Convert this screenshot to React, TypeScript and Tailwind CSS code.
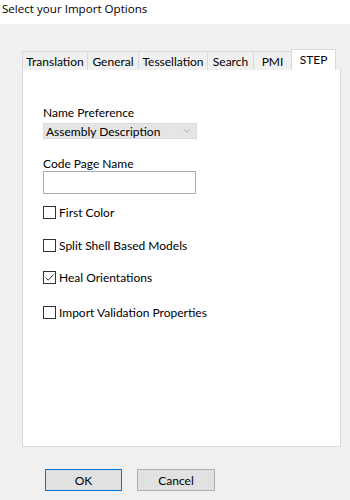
import { ChevronDown } from "lucide-react";

const TABS = [
  { label: "Translation", w: "w-[65px]" },
  { label: "General", w: "w-[51px]" },
  { label: "Tessellation", w: "w-[69px]" },
  { label: "Search", w: "w-[46px]" },
  { label: "PMI", w: "w-[38px]" },
];

const OPTIONS = [
  { label: "First Color", checked: false, mt: "mt-[11px]" },
  { label: "Split Shell Based Models", checked: false, mt: "mt-[18px]" },
  { label: "Heal Orientations", checked: true, mt: "mt-[17px]" },
  { label: "Import Validation Properties", checked: false, mt: "mt-[20px]" },
];

function Checkbox({ checked }: { checked: boolean }) {
  return (
    <span className="w-[13px] h-[13px] border border-[#333333] bg-white flex items-center justify-center shrink-0">
      {checked && (
        <svg width="11" height="11" viewBox="0 0 11 11" fill="none">
          <path d="M1.5 5.5 L4.2 8.2 L9.5 2.5" stroke="#333333" strokeWidth="1" />
        </svg>
      )}
    </span>
  );
}

export default function App() {
  return (
    <div className="w-[350px] h-[500px] flex flex-col bg-white text-black font-['Lato',sans-serif] text-[12px] leading-[15px]">
      <div className="h-6 pl-[2px] pt-[1px] text-[11.6px] font-['Open_Sans',sans-serif]">
        Select your Import Options
      </div>
      <div className="flex-1 bg-[#f0f0f0] pl-[22px] pr-[9px] pt-[25px]">
        <div className="flex items-end h-[21px]">
          {TABS.map((t) => (
            <div
              key={t.label}
              className={`${t.w} h-[19px] border border-r-0 border-b-0 border-[#d9d9d9] bg-[#f0f0f0] flex items-center justify-center`}
            >
              {t.label}
            </div>
          ))}
          <div className="w-[45px] h-[21px] border border-b-0 border-[#d9d9d9] bg-white flex items-start justify-center pt-[2px]">
            STEP
          </div>
        </div>
        <div className="h-[377px] bg-white border border-t-0 border-[#d9d9d9] pl-[20px] pt-[35px]">
          <div>Name Preference</div>
          <div className="mt-[3px] w-[154px] h-[16px] bg-[#e5e5e5] border border-[#dcdcdc] flex items-center justify-between pl-[2px] pr-[4px]">
            <span>Assembly Description</span>
            <ChevronDown className="w-[10px] h-[10px] text-[#808080]" strokeWidth={1.5} />
          </div>
          <div className="mt-[17px]">Code Page Name</div>
          <div className="w-[153px] h-[23px] border border-[#abadb3] bg-white" />
          {OPTIONS.map((o) => (
            <div key={o.label} className={`${o.mt} flex items-center gap-[3px]`}>
              <Checkbox checked={o.checked} />
              <span>{o.label}</span>
            </div>
          ))}
        </div>
        <div className="flex gap-[15px] pl-[23px] mt-[22px]">
          <button
            type="button"
            className="w-[77px] h-[22px] bg-[#e1e1e1] border border-[#0078d7] text-[12px]"
          >
            OK
          </button>
          <button
            type="button"
            className="w-[78px] h-[22px] bg-[#e1e1e1] border border-[#adadad] text-[12px]"
          >
            Cancel
          </button>
        </div>
      </div>
    </div>
  );
}
